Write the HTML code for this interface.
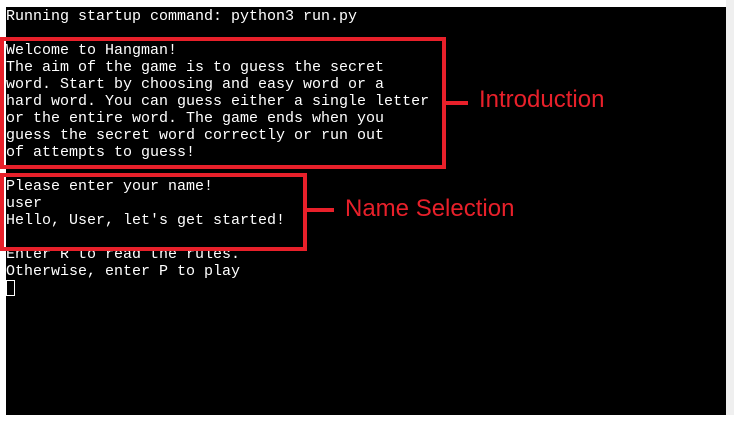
<!DOCTYPE html>
<html><head><meta charset="utf-8"><style>
html,body{margin:0;padding:0;background:#fff;width:734px;height:429px;overflow:hidden;position:relative}
.term{position:absolute;left:6px;top:7px;width:720px;height:408px;background:#000}
.sb{position:absolute;left:726px;top:0;width:8px;height:415px;background:#efefef}
pre{position:absolute;left:6px;top:8px;margin:0;font-family:"Liberation Mono",monospace;font-size:15px;line-height:17px;color:#fff;letter-spacing:0;font-weight:bold;-webkit-text-stroke:0}
.box{position:absolute;border:4px solid #e8202a;box-sizing:border-box}
.ln{position:absolute;height:4px;background:#e8202a}
.lbl{position:absolute;font-family:"Liberation Sans",Arial,sans-serif;font-size:24px;color:#e8202a;line-height:1}
.cur{position:absolute;left:6px;top:280px;width:7px;height:14px;border:1px solid #fff}
</style></head><body>
<div class="term"></div><div class="sb"></div>
<pre style="font-weight:normal">Running startup command: python3 run.py

Welcome to Hangman!
The aim of the game is to guess the secret
word. Start by choosing and easy word or a
hard word. You can guess either a single letter
or the entire word. The game ends when you
guess the secret word correctly or run out
of attempts to guess!

Please enter your name!
user
Hello, User, let's get started!

Enter R to read the rules.
Otherwise, enter P to play</pre>
<div class="cur"></div>
<div class="box" style="left:0;top:37px;width:446px;height:132px"></div>
<div class="ln" style="left:446px;top:101px;width:22px"></div>
<div class="lbl" style="left:479px;top:88px">Introduction</div>
<div class="box" style="left:0;top:173px;width:307px;height:78px"></div>
<div class="ln" style="left:307px;top:208px;width:27px"></div>
<div class="lbl" style="left:345px;top:197px">Name Selection</div>
</body></html>
